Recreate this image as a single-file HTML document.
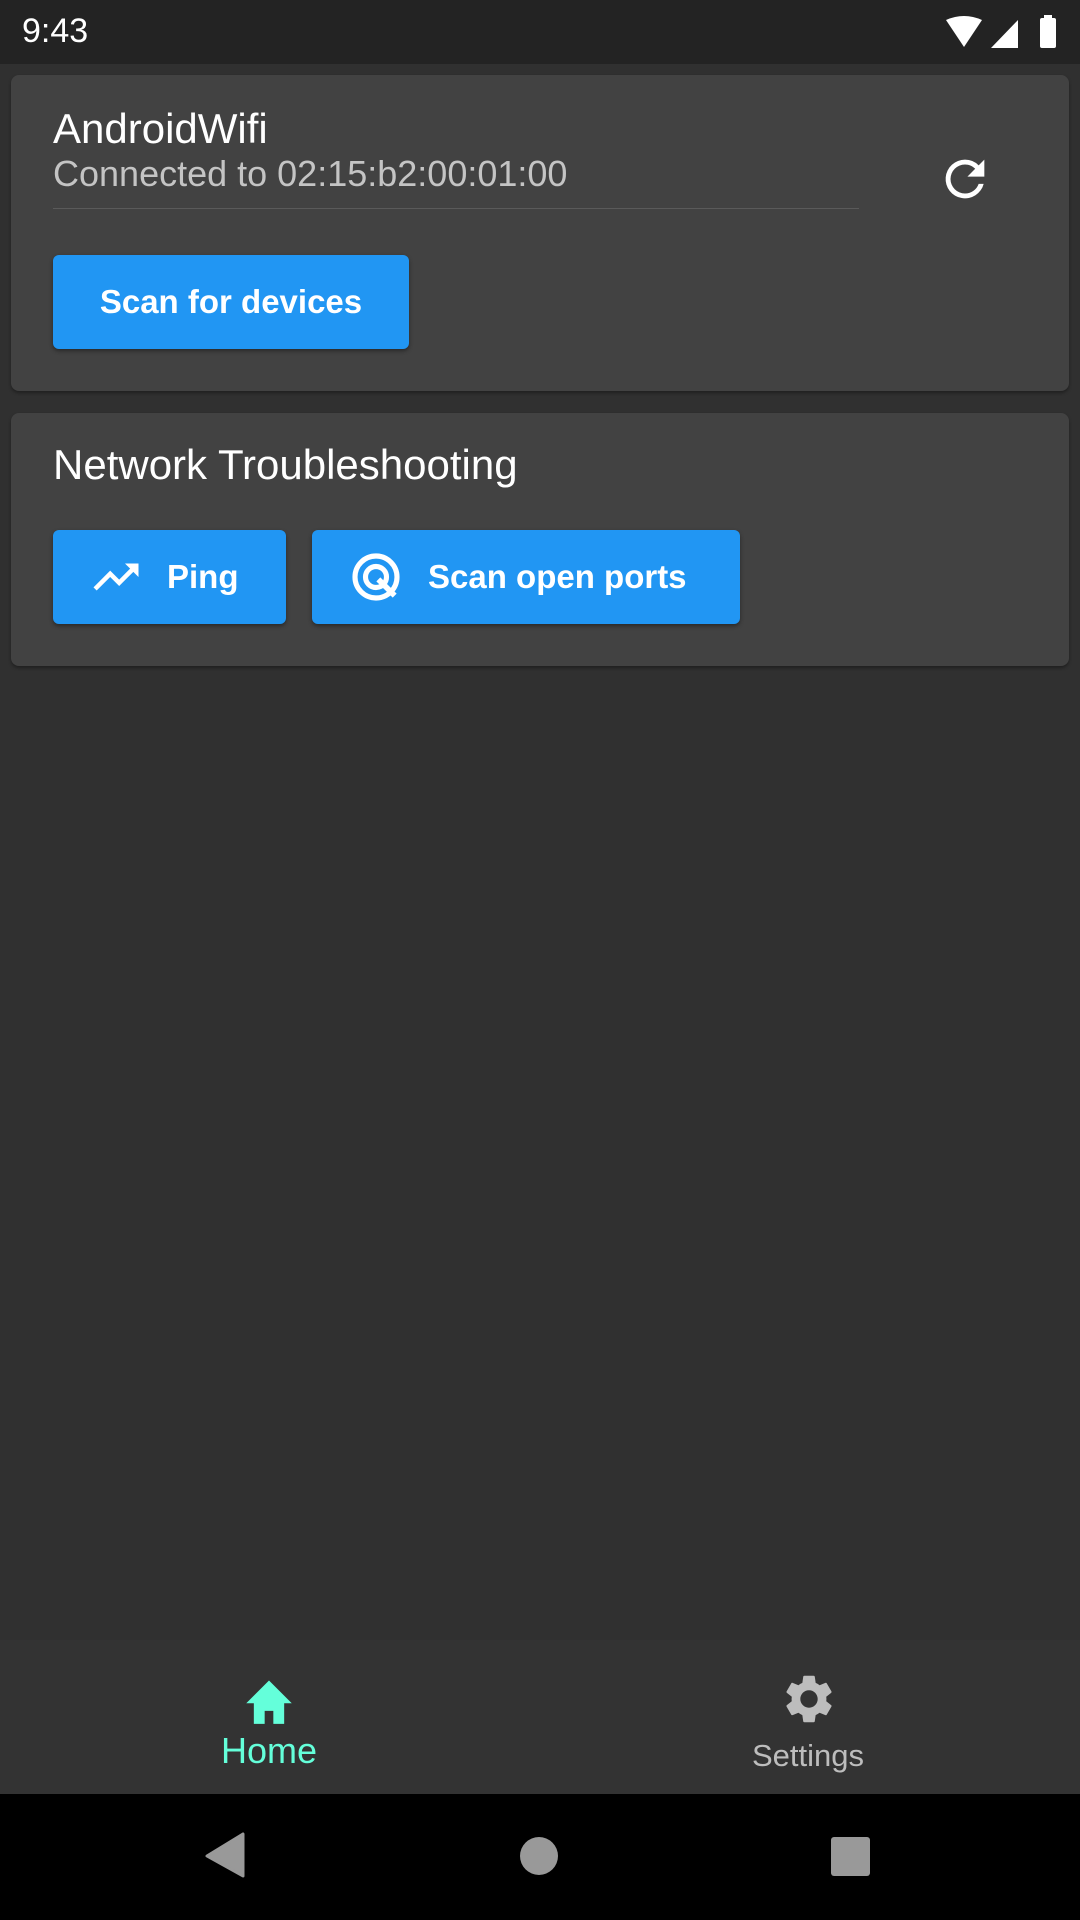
<!DOCTYPE html>
<html><head><meta charset="utf-8"><style>
*{margin:0;padding:0;box-sizing:border-box}
body{width:1080px;height:1920px;background:#303030;font-family:"Liberation Sans",sans-serif;position:relative;overflow:hidden;color:#fff}
.abs{position:absolute}
.card{position:absolute;left:11px;width:1058px;background:#424242;border-radius:8px;box-shadow:0 2px 3px rgba(0,0,0,.35)}
.btn{position:absolute;background:#2196f3;border-radius:6px;box-shadow:0 2px 4px rgba(0,0,0,.4);color:#fff;font-weight:bold;font-size:33px;display:flex;align-items:center}
</style></head><body>
<div class="abs" style="left:0;top:0;width:1080px;height:64px;background:#232323"></div>
<div class="abs" style="left:22px;top:12px;font-size:34px;color:#fff">9:43</div>
<svg class="abs" style="left:940px;top:14px" width="125" height="36" viewBox="0 0 125 36">
<path d="M6 6 Q24 -2 42 6 L24 33 Z" fill="#fff"/>
<path d="M51 34 L78 6 L78 34 Z" fill="#fff"/>
<rect x="100" y="4" width="16" height="30" rx="2" fill="#fff"/>
<rect x="104" y="1" width="8" height="4" fill="#fff"/>
</svg>

<div class="card" style="top:75px;height:316px">
<div class="abs" style="left:42px;top:30px;font-size:42px">AndroidWifi</div>
<div class="abs" style="left:42px;top:78px;font-size:36px;color:#c4c4c4">Connected to 02:15:b2:00:01:00</div>
<div class="abs" style="left:42px;top:133px;width:806px;height:1px;background:#5a5a5a"></div>
<svg class="abs" style="left:925px;top:75px" width="58" height="58" viewBox="0 0 24 24"><path fill="#fff" d="M17.65 6.35A7.958 7.958 0 0 0 12 4a8 8 0 1 0 7.730 10h-2.08A5.99 5.99 0 0 1 12 18a6 6 0 1 1 0-12c1.66 0 3.14.69 4.22 1.78L13 11h7V4l-2.35 2.35z"/></svg>
<div class="btn" style="left:42px;top:180px;width:356px;height:94px;justify-content:center">Scan for devices</div>
</div>

<div class="card" style="top:413px;height:253px">
<div class="abs" style="left:42px;top:28px;font-size:42px">Network Troubleshooting</div>
<div class="btn" style="left:42px;top:117px;width:233px;height:94px">
<svg style="margin-left:36px" width="54" height="54" viewBox="0 0 24 24"><path fill="#fff" d="M16 6l2.29 2.29-4.88 4.88-4-4L2 16.59 3.41 18l6-6 4 4 6.3-6.29L22 12V6z"/></svg>
<span style="margin-left:24px">Ping</span></div>
<div class="btn" style="left:301px;top:117px;width:428px;height:94px">
<svg style="margin-left:36px" width="56" height="56" viewBox="0 0 24 24"><circle cx="12" cy="12" r="9" fill="none" stroke="#fff" stroke-width="2.2"/><circle cx="12" cy="12" r="4.5" fill="none" stroke="#fff" stroke-width="2.2"/><path d="M13 13 L20 20" stroke="#fff" stroke-width="2.4"/></svg>
<span style="margin-left:24px">Scan open ports</span></div>
</div>

<div class="abs" style="left:0;top:1640px;width:1080px;height:154px;background:#333"></div>
<svg class="abs" style="left:243px;top:1674px" width="52" height="52" viewBox="0 0 24 24"><path fill="#64ffda" d="M12 3 L1.5 13.5 H5 V23 H10 V17 H14 V23 H19 V13.5 H22.5 Z"/></svg>
<div class="abs" style="left:221px;top:1730px;font-size:36px;color:#64ffda">Home</div>
<svg class="abs" style="left:780px;top:1670px" width="58" height="58" viewBox="0 0 24 24"><path fill="#bdbdbd" d="M19.14 12.94c.04-.3.06-.61.06-.94 0-.32-.02-.64-.07-.94l2.03-1.58a.49.49 0 0 0 .12-.61l-1.920-3.32a.488.488 0 0 0-.59-.22l-2.39.96c-.5-.38-1.030-.7-1.62-.94l-.36-2.54a.484.484 0 0 0-.48-.41h-3.84c-.24 0-.43.17-.47.41l-.36 2.540c-.59.24-1.13.57-1.62.94l-2.39-.96c-.22-.08-.47 0-.59.22L2.74 8.87c-.12.21-.08.47.12.61l2.03 1.58c-.05.3-.09.63-.09.94s.02.64.07.94l-2.03 1.58a.49.49 0 0 0-.12.61l1.92 3.32c.12.22.37.29.59.22l2.39-.96c.5.38 1.03.7 1.62.94l.36 2.54c.05.24.24.41.48.41h3.84c.24 0 .44-.17.47-.41l.36-2.54c.59-.24 1.13-.56 1.62-.94l2.39.96c.22.08.47 0 .59-.22l1.92-3.32c.12-.22.07-.47-.12-.61l-2.01-1.58zM12 15.6c-1.98 0-3.6-1.62-3.6-3.6s1.62-3.6 3.6-3.6 3.6 1.62 3.6 3.6-1.62 3.6-3.6 3.6z"/></svg>
<div class="abs" style="left:752px;top:1738px;font-size:31px;color:#bdbdbd">Settings</div>

<div class="abs" style="left:0;top:1794px;width:1080px;height:126px;background:#000"></div>
<svg class="abs" style="left:0;top:1794px" width="1080" height="126">
<path d="M243 40 L243 82 L207 62 Z" fill="#999" stroke="#999" stroke-width="3" stroke-linejoin="round"/>
<circle cx="539" cy="62" r="19" fill="#999"/>
<rect x="831" y="43" width="39" height="39" rx="3" fill="#999"/>
</svg>
</body></html>
